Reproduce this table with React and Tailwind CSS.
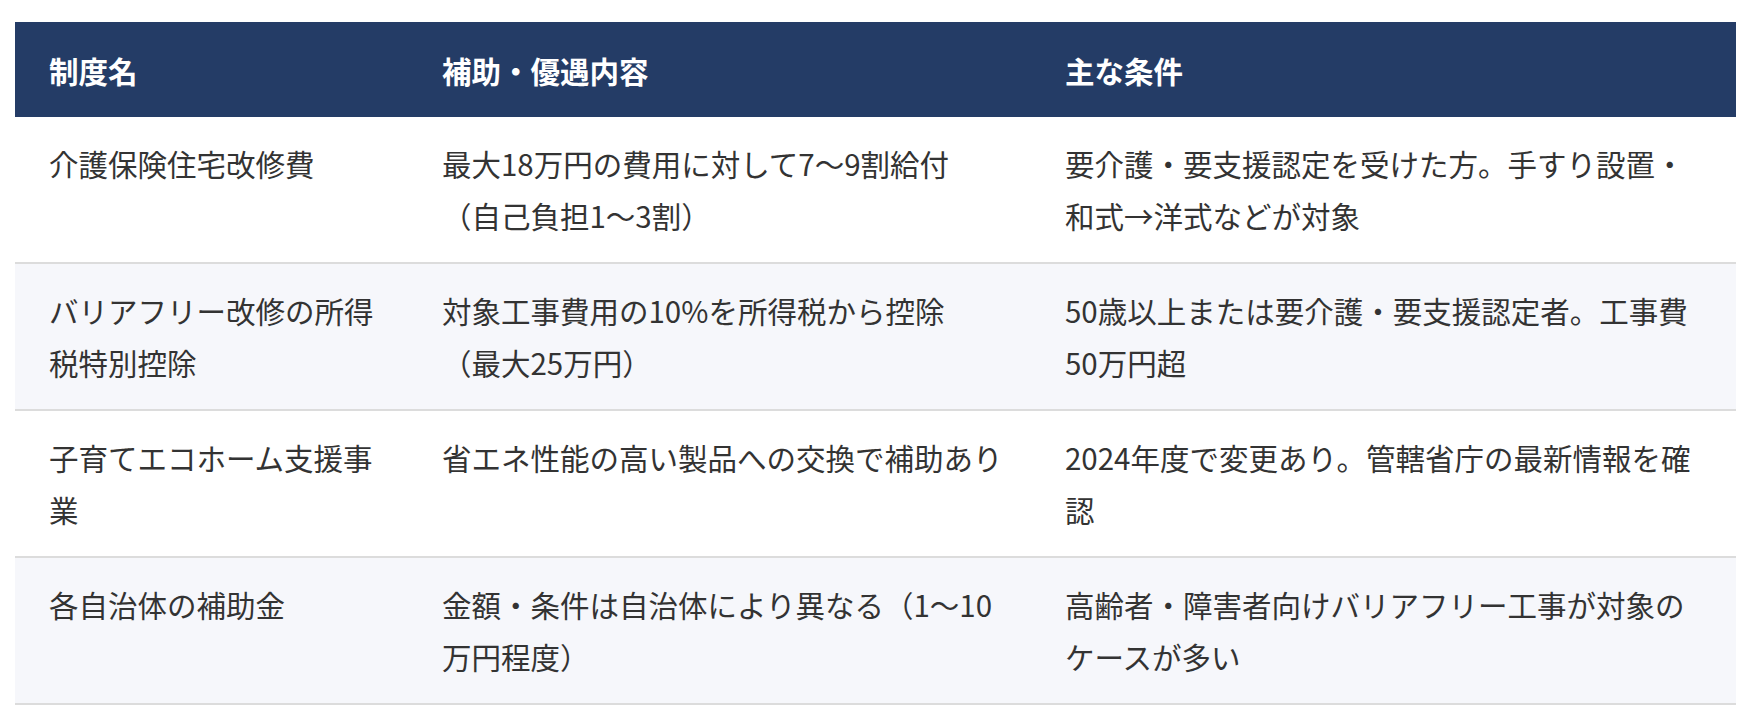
// Support programmes table: name / benefit / main conditions.
// Lines are split where the original page wraps them.

const ROWS = [
  [
    ["介護保険住宅改修費"],
    ["最大18万円の費用に対して7〜9割給付", "（自己負担1〜3割）"],
    ["要介護・要支援認定を受けた方。手すり設置・", "和式→洋式などが対象"],
  ],
  [
    ["バリアフリー改修の所得", "税特別控除"],
    ["対象工事費用の10%を所得税から控除", "（最大25万円）"],
    ["50歳以上または要介護・要支援認定者。工事費", "50万円超"],
  ],
  [
    ["子育てエコホーム支援事", "業"],
    ["省エネ性能の高い製品への交換で補助あり"],
    ["2024年度で変更あり。管轄省庁の最新情報を確", "認"],
  ],
  [
    ["各自治体の補助金"],
    ["金額・条件は自治体により異なる（1〜10", "万円程度）"],
    ["高齢者・障害者向けバリアフリー工事が対象の", "ケースが多い"],
  ],
];

export default function App() {
  return (
    <div
      className="bg-white min-h-screen pt-[22px] pl-[15px] pr-[18px] text-[#333333]"
      style={{ fontFamily: '"Noto Sans CJK JP", "Noto Sans", sans-serif' }}
    >
      <table className="w-[1721px] table-fixed border-collapse text-[29.5px] leading-[52.5px]">
        <colgroup>
          <col className="w-[395px]" />
          <col className="w-[623px]" />
          <col className="w-[703px]" />
        </colgroup>
        <thead>
          <tr className="bg-[#243c66] text-white">
            <th className="px-[34px] pt-[21.5px] pb-[20.5px] text-left font-bold">制度名</th>
            <th className="px-[32px] pt-[21.5px] pb-[20.5px] text-left font-bold">補助・優遇内容</th>
            <th className="px-[32px] pt-[21.5px] pb-[20.5px] text-left font-bold">主な条件</th>
          </tr>
        </thead>
        <tbody>
          {ROWS.map((row, i) => (
            <tr
              key={row[0][0]}
              className={`border-b-2 border-[#dcdcdc] ${i % 2 === 1 ? "bg-[#f6f7fb]" : "bg-white"}`}
            >
              {row.map((lines, j) => (
                <td
                  key={j}
                  className={`${j === 0 ? "px-[34px]" : "px-[32px]"} py-[20px] align-top font-normal whitespace-nowrap`}
                >
                  {lines.map((line) => (
                    <div key={line}>{line}</div>
                  ))}
                </td>
              ))}
            </tr>
          ))}
        </tbody>
      </table>
    </div>
  );
}
